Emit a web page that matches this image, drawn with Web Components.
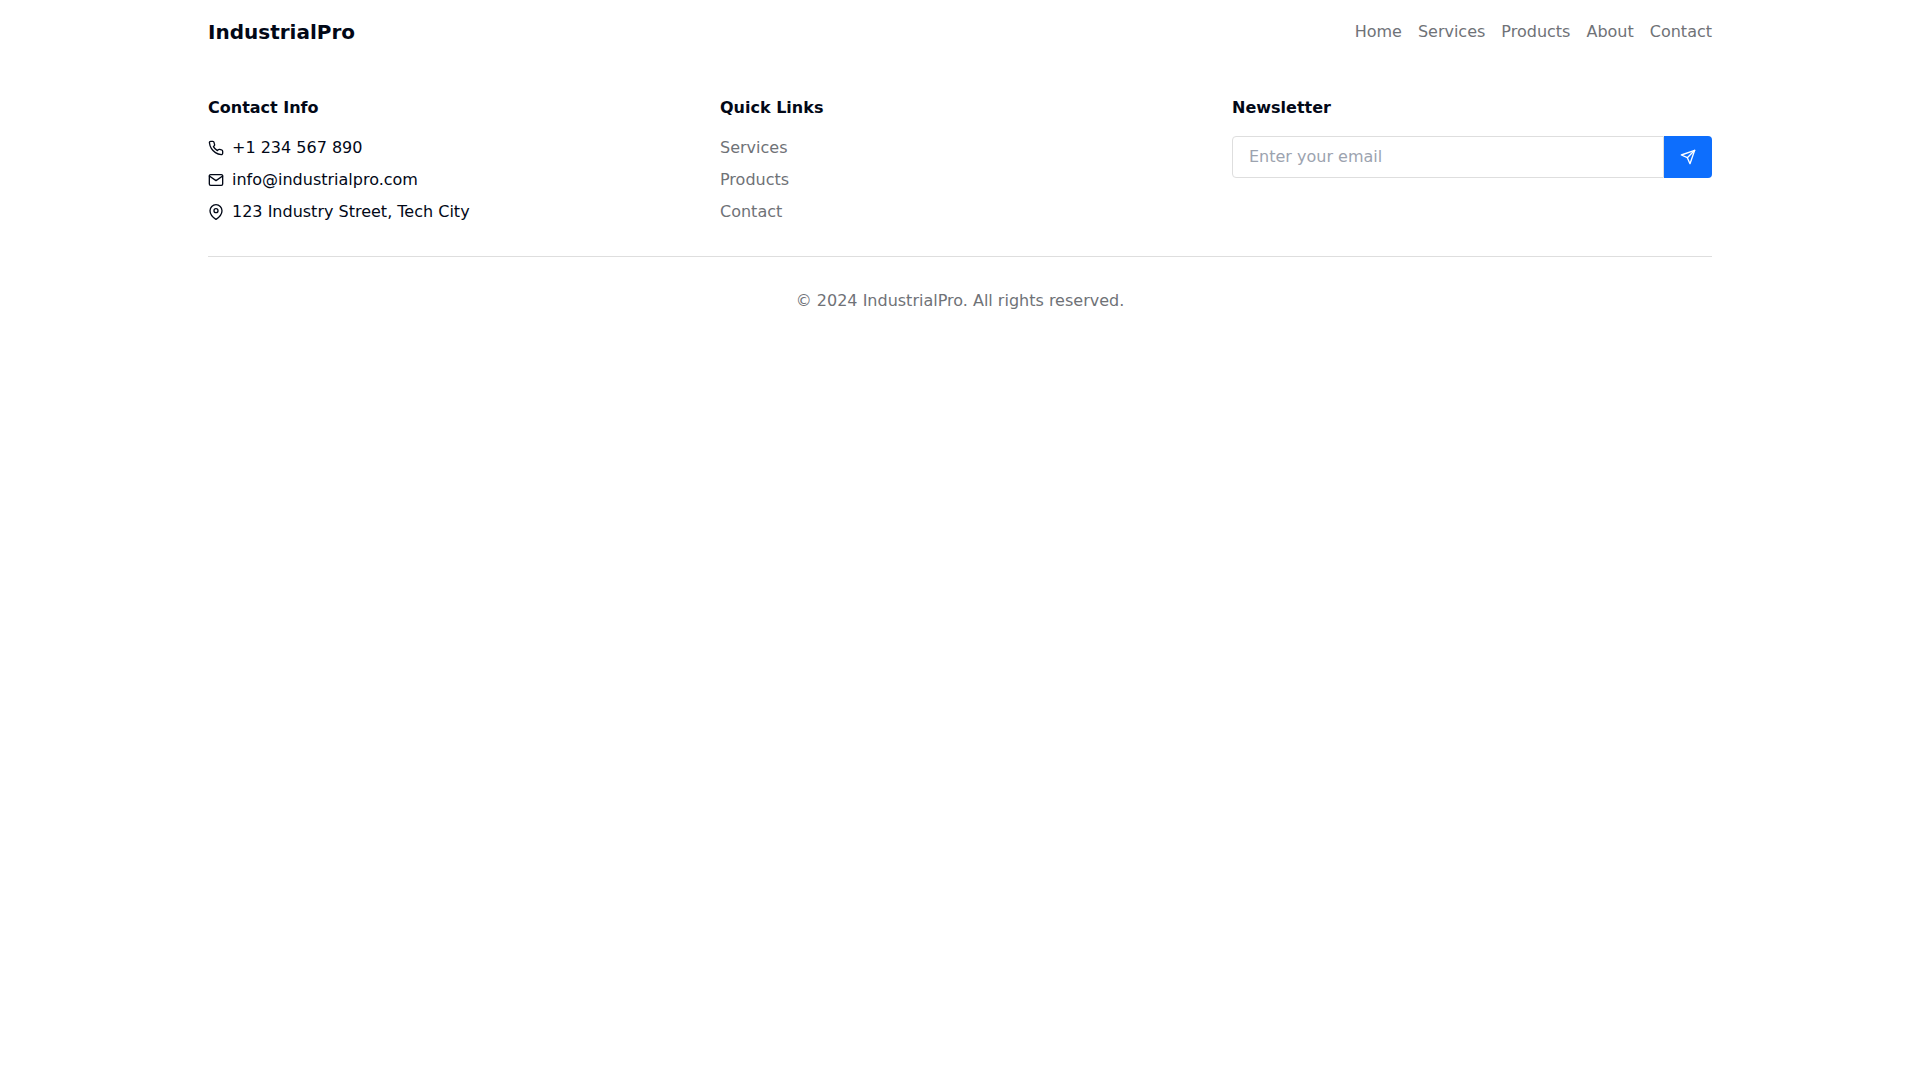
<!DOCTYPE html>
<html lang="en">
<head>
  <meta charset="UTF-8">
  <meta name="viewport" content="width=device-width, initial-scale=1.0">
  <title>IndustrialPro</title>
  <style>
    :root {
      --background: #fff;
      --foreground: #020817;
      --muted: #6f7277;
      --placeholder: #9ca3af;
      --border: #dedede;
      --accent: #0d6efd;
    }

    body {
      margin: 0;
      background: var(--background);
      color: var(--foreground);
      font-family: "DejaVu Sans", sans-serif;
      font-size: 16px;
      line-height: 24px;
    }
  </style>
</head>
<body>
  <site-header></site-header>
  <site-footer></site-footer>

  <script>
    const ICONS = {
      phone: `<path d="M22 16.92v3a2 2 0 0 1-2.18 2 19.79 19.79 0 0 1-8.63-3.07 19.5 19.5 0 0 1-6-6 19.79 19.79 0 0 1-3.07-8.67A2 2 0 0 1 4.11 2h3a2 2 0 0 1 2 1.72 12.84 12.84 0 0 0 .7 2.81 2 2 0 0 1-.45 2.11L8.09 9.91a16 16 0 0 0 6 6l1.27-1.27a2 2 0 0 1 2.11-.45 12.84 12.84 0 0 0 2.81.7A2 2 0 0 1 22 16.92z"/>`,
      mail: `<path d="M4 4h16c1.1 0 2 .9 2 2v12c0 1.1-.9 2-2 2H4c-1.1 0-2-.9-2-2V6c0-1.1.9-2 2-2z"/><polyline points="22,6 12,13 2,6"/>`,
      pin: `<path d="M21 10c0 7-9 13-9 13s-9-6-9-13a9 9 0 0 1 18 0z"/><circle cx="12" cy="10" r="3"/>`,
      send: `<line x1="22" y1="2" x2="11" y2="13"/><polygon points="22 2 15 22 11 13 2 9 22 2"/>`,
    };

    class LineIcon extends HTMLElement {
      constructor() {
        super();
        this.attachShadow({ mode: "open" });
      }

      connectedCallback() {
        this.shadowRoot.innerHTML = `
          <style>
            :host {
              display: block;
              flex: none;
              width: 16px;
              height: 16px;
            }

            svg {
              display: block;
              width: 100%;
              height: 100%;
            }
          </style>
          <svg viewBox="0 0 24 24" fill="none" stroke="currentColor" stroke-width="2"
            stroke-linecap="round" stroke-linejoin="round" aria-hidden="true">
            ${ICONS[this.getAttribute("name")] || ""}
          </svg>
        `;
      }
    }

    class NavLink extends HTMLElement {
      constructor() {
        super();
        this.attachShadow({ mode: "open" });
      }

      connectedCallback() {
        this.shadowRoot.innerHTML = `
          <style>
            :host {
              display: block;
            }

            a {
              color: var(--muted);
              text-decoration: none;
            }

            a:hover {
              color: var(--foreground);
            }
          </style>
          <a href="${this.getAttribute("href") || "#"}"><slot></slot></a>
        `;
      }
    }

    class SiteHeader extends HTMLElement {
      constructor() {
        super();
        this.attachShadow({ mode: "open" });
      }

      connectedCallback() {
        this.shadowRoot.innerHTML = `
          <style>
            :host {
              display: block;
            }

            header {
              box-sizing: border-box;
              display: flex;
              align-items: center;
              justify-content: space-between;
              max-width: 1536px;
              min-height: 64px;
              margin: 0 auto;
              padding: 0 16px;
            }

            .logo {
              color: inherit;
              font-size: 20px;
              font-weight: 700;
              line-height: 28px;
              text-decoration: none;
            }

            nav {
              display: flex;
              flex-wrap: wrap;
              gap: 16px;
            }
          </style>
          <header>
            <a class="logo" href="#">IndustrialPro</a>
            <nav>
              <nav-link href="#home">Home</nav-link>
              <nav-link href="#services">Services</nav-link>
              <nav-link href="#products">Products</nav-link>
              <nav-link href="#about">About</nav-link>
              <nav-link href="#contact">Contact</nav-link>
            </nav>
          </header>
        `;
      }
    }

    class FooterColumn extends HTMLElement {
      constructor() {
        super();
        this.attachShadow({ mode: "open" });
      }

      connectedCallback() {
        this.shadowRoot.innerHTML = `
          <style>
            :host {
              display: block;
              min-width: 0;
            }

            h3 {
              margin: 0 0 16px;
              font-size: 16px;
              font-weight: 700;
            }

            .items {
              display: flex;
              flex-direction: column;
              gap: 8px;
            }
          </style>
          <h3>${this.getAttribute("heading") || ""}</h3>
          <div class="items"><slot></slot></div>
        `;
      }
    }

    class ContactItem extends HTMLElement {
      constructor() {
        super();
        this.attachShadow({ mode: "open" });
      }

      connectedCallback() {
        this.shadowRoot.innerHTML = `
          <style>
            :host {
              display: flex;
              align-items: center;
              gap: 8px;
            }
          </style>
          <line-icon name="${this.getAttribute("icon")}"></line-icon>
          <span><slot></slot></span>
        `;
      }
    }

    class NewsletterForm extends HTMLElement {
      constructor() {
        super();
        this.attachShadow({ mode: "open" });
      }

      connectedCallback() {
        this.shadowRoot.innerHTML = `
          <style>
            :host {
              display: block;
            }

            form {
              display: flex;
            }

            input {
              box-sizing: border-box;
              flex: 1;
              min-width: 0;
              margin: 0;
              padding: 8px 16px;
              border: 1px solid var(--border);
              border-radius: 4px 0 0 4px;
              background: var(--background);
              color: inherit;
              font: inherit;
            }

            input::placeholder {
              color: var(--placeholder);
              opacity: 1;
            }

            button {
              display: flex;
              align-items: center;
              margin: 0;
              padding: 8px 16px;
              border: 0;
              border-radius: 0 4px 4px 0;
              background: var(--accent);
              color: #fff;
              cursor: pointer;
            }
          </style>
          <form>
            <input type="email" placeholder="Enter your email" aria-label="Email address">
            <button type="submit" aria-label="Subscribe"><line-icon name="send"></line-icon></button>
          </form>
        `;
        this.shadowRoot
          .querySelector("form")
          .addEventListener("submit", (event) => event.preventDefault());
      }
    }

    class SiteFooter extends HTMLElement {
      constructor() {
        super();
        this.attachShadow({ mode: "open" });
      }

      connectedCallback() {
        this.shadowRoot.innerHTML = `
          <style>
            :host {
              display: block;
            }

            footer {
              box-sizing: border-box;
              max-width: 1536px;
              margin: 0 auto;
              padding: 32px 16px;
            }

            .columns {
              display: grid;
              grid-template-columns: repeat(3, minmax(0, 1fr));
              gap: 32px;
            }

            .copyright {
              margin: 32px 0 0;
              padding-top: 32px;
              border-top: 1px solid var(--border);
              color: var(--muted);
              text-align: center;
            }

            @media (max-width: 767px) {
              .columns {
                grid-template-columns: 1fr;
              }
            }
          </style>
          <footer>
            <div class="columns">
              <footer-column heading="Contact Info">
                <contact-item icon="phone">+1 234 567 890</contact-item>
                <contact-item icon="mail">info@industrialpro.com</contact-item>
                <contact-item icon="pin">123 Industry Street, Tech City</contact-item>
              </footer-column>
              <footer-column heading="Quick Links">
                <nav-link href="#services">Services</nav-link>
                <nav-link href="#products">Products</nav-link>
                <nav-link href="#contact">Contact</nav-link>
              </footer-column>
              <footer-column heading="Newsletter">
                <newsletter-form></newsletter-form>
              </footer-column>
            </div>
            <p class="copyright">© 2024 IndustrialPro. All rights reserved.</p>
          </footer>
        `;
      }
    }

    customElements.define("line-icon", LineIcon);
    customElements.define("nav-link", NavLink);
    customElements.define("site-header", SiteHeader);
    customElements.define("footer-column", FooterColumn);
    customElements.define("contact-item", ContactItem);
    customElements.define("newsletter-form", NewsletterForm);
    customElements.define("site-footer", SiteFooter);
  </script>
</body>
</html>
